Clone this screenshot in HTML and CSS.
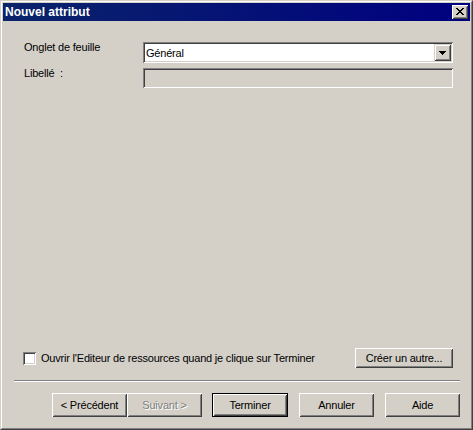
FILE: index.html
```html
<!DOCTYPE html>
<html>
<head>
<meta charset="utf-8">
<link rel="stylesheet" href="styles.css">
</head>
<body>
<div class="window">
  <div class="frame">
    <div class="titlebar">
      <span class="title">Nouvel attribut</span>
      <span class="close"><svg width="8" height="7" viewBox="0 0 8 7"><path d="M0 0h2v1h1v1h2v-1h1v-1h2v1h-1v1h-1v1h-1v1h1v1h1v1h1v1h-2v-1h-1v-1h-2v1h-1v1h-2v-1h1v-1h1v-1h1v-1h-1v-1h-1v-1h-1z" fill="#000"/></svg></span>
    </div>
    <div class="client">
      <div class="form">
        <div class="label">Onglet de feuille</div>
        <div class="combo">
          <span class="combo-text">Général</span>
          <span class="drop"><svg width="7" height="4" viewBox="0 0 7 4"><path d="M0 0h7v1h-1v1h-1v1h-1v1h-1v-1h-1v-1h-1v-1h-1z" fill="#000"/></svg></span>
        </div>
        <div class="label">Libellé&nbsp; :</div>
        <div class="field"></div>
      </div>
      <div class="spacer"></div>
      <div class="check-row">
        <label class="check"><span class="box"></span><span>Ouvrir l'Editeur de ressources quand je clique sur Terminer</span></label>
        <button class="btn btn-other">Créer un autre...</button>
      </div>
      <div class="sep"></div>
      <div class="buttons">
        <button class="btn">&lt; Précédent</button>
        <button class="btn disabled">Suivant &gt;</button>
        <button class="btn default">Terminer</button>
        <button class="btn">Annuler</button>
        <button class="btn">Aide</button>
      </div>
    </div>
  </div>
</div>
</body>
</html>
```
FILE: styles.css
```css
* { box-sizing: border-box; }
html, body { margin: 0; padding: 0; background: #d4d0c8; }
body { font-family: "Liberation Sans", Arial, sans-serif; font-size: 11px; line-height: 13px; color: #000; letter-spacing: -0.2px; }

.window {
  width: 473px;
  height: 430px;
  border: 1px solid;
  border-color: #d4d0c8 #404040 #404040 #d4d0c8;
  background: #d4d0c8;
}
.frame {
  height: 100%;
  border: 1px solid;
  border-color: #fff #808080 #808080 #fff;
  padding: 1px;
  display: flex;
  flex-direction: column;
}
.titlebar {
  height: 18px;
  flex: none;
  background: linear-gradient(to right, #0a246a, #000080);
  display: flex;
  align-items: center;
  justify-content: space-between;
  padding: 0 2px 0 2px;
}
.title {
  color: #fff;
  font-weight: bold;
  font-size: 12px;
  line-height: 14px;
  letter-spacing: 0;
}
.close {
  width: 16px;
  height: 14px;
  background: #d4d0c8;
  box-shadow: inset 1px 1px #fff, inset -1px -1px #404040, inset 2px 2px #d4d0c8, inset -2px -2px #808080;
  display: flex;
  align-items: center;
  justify-content: center;
  padding: 0 1px 1px 0;
}
.close svg { display: block; }

.client {
  flex: 1;
  display: flex;
  flex-direction: column;
  padding: 21px 0 10px 0;
}
.form {
  display: grid;
  grid-template-columns: 119px 310px;
  row-gap: 5px;
  padding-left: 21px;
}
.label { margin-top: -1px; }
.combo {
  height: 21px;
  background: #fff;
  box-shadow: inset 1px 1px #808080, inset -1px -1px #fff, inset 2px 2px #404040, inset -2px -2px #d4d0c8;
  display: flex;
  align-items: center;
  justify-content: space-between;
  padding: 2px 2px 2px 3px;
}
.combo-text { padding-top: 1px; }
.drop {
  width: 17px;
  height: 17px;
  background: #d4d0c8;
  box-shadow: inset 1px 1px #d4d0c8, inset -1px -1px #404040, inset 2px 2px #fff, inset -2px -2px #808080;
  display: flex;
  align-items: center;
  justify-content: center;
  padding-top: 1px;
}
.drop svg { display: block; }
.field {
  height: 20px;
  background: #d4d0c8;
  box-shadow: inset 1px 1px #808080, inset -1px -1px #fff, inset 2px 2px #404040, inset -2px -2px #d4d0c8;
}
.spacer { flex: 1; }

.check-row {
  display: flex;
  align-items: center;
  justify-content: space-between;
  padding: 0 17px 0 20px;
}
.check {
  display: flex;
  align-items: center;
  gap: 5px;
  padding-top: 1px;
}
.box {
  width: 13px;
  height: 13px;
  background: #fff;
  box-shadow: inset 1px 1px #808080, inset -1px -1px #fff, inset 2px 2px #404040, inset -2px -2px #d4d0c8;
}
.btn {
  font-family: "Liberation Sans", Arial, sans-serif;
  font-size: 11px;
  line-height: 13px;
  letter-spacing: -0.2px;
  color: #000;
  background: #d4d0c8;
  border: none;
  margin: 0;
  width: 75px;
  height: 24px;
  padding: 0;
  box-shadow: inset 1px 1px #fff, inset -1px -1px #404040, inset 2px 2px #d4d0c8, inset -2px -2px #808080;
  text-align: center;
}
.btn-other { width: 98px; height: 20px; }
.disabled { color: #808080; text-shadow: 1px 1px #fff; }
.default {
  border: 1px solid #000;
  width: 76px;
}
.sep {
  margin: 12px 10px 0 11px;
  height: 2px;
  border-top: 1px solid #808080;
  border-bottom: 1px solid #fff;
}
.buttons {
  display: flex;
  justify-content: flex-end;
  gap: 11px;
  padding: 11px 10px 0 0;
}
.buttons .btn:first-child { margin-right: -11px; }
.buttons .btn:nth-child(2) { margin-right: -1px; }
```
